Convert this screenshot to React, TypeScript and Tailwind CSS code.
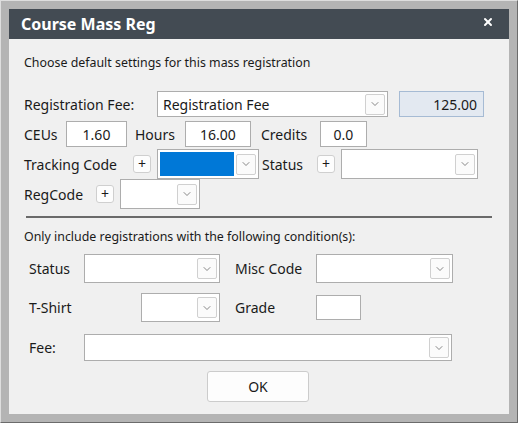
import { ChevronDown, X } from 'lucide-react';

const font = { fontFamily: '"Noto Sans", "Open Sans", sans-serif' };

function DropButton() {
  return (
    <div className="flex h-[21px] w-[20px] shrink-0 items-center justify-center rounded-[2px] border border-[#d0d0d0] bg-[#fbfbfb]">
      <ChevronDown size={12} strokeWidth={1.4} className="text-[#555]" />
    </div>
  );
}

function Select({ w, h = 'h-[26px]', children }: { w: string; h?: string; children?: React.ReactNode }) {
  return (
    <div className={`${w} ${h} flex shrink-0 items-center border border-[#adadad] bg-white pr-[2px]`}>
      <div className="flex min-w-0 flex-1 items-center self-stretch">{children}</div>
      <DropButton />
    </div>
  );
}

function PlusButton() {
  return (
    <div className="flex h-[18px] w-[18px] shrink-0 items-center justify-center rounded-[3px] border border-[#cfcfcf] bg-[#fdfdfd] text-[14px] leading-none text-[#1a1a1a]">
      +
    </div>
  );
}

function Box({ w, value }: { w: string; value?: string }) {
  return (
    <div className={`${w} flex h-[26px] shrink-0 items-center justify-center border border-[#adadad] bg-white text-[14px] text-[#1a1a1a]`}>
      {value}
    </div>
  );
}

export default function App() {
  return (
    <div className="h-[423px] w-[518px] border border-t-[#dedede] border-l-[#dedede] border-b-[#6b6b6b] border-r-[#6b6b6b] bg-[#b4b4b4] p-[8px]" style={font}>
      <div className="flex h-[405px] w-[500px] flex-col bg-[#f0f0f0] text-[#1a1a1a]">
        {/* title bar */}
        <div className="flex h-[30px] shrink-0 items-center justify-between bg-[#434b53] pl-[12px] pr-[15px]">
          <span className="text-[16px] font-bold text-white">Course Mass Reg</span>
          <X size={12} strokeWidth={4} className="mb-[5px] text-white" />
        </div>

        <div className="flex flex-col pl-[15px]">
          <div className="mt-[14px] h-[20px] text-[12.4px] leading-[20px]">Choose default settings for this mass registration</div>

          {/* registration fee */}
          <div className="mt-[18px] flex h-[26px] items-center text-[14px]">
            <span className="w-[133px] shrink-0">Registration Fee:</span>
            <Select w="w-[231px]">
              <span className="pl-[5px] text-[14px]">Registration Fee</span>
            </Select>
            <div className="ml-[11px] flex h-[26px] w-[85px] items-center justify-end border border-[#a6bbd4] bg-[#e3e9f1] pr-[6px] text-[14px]">
              125.00
            </div>
          </div>

          {/* ceus / hours / credits */}
          <div className="mt-[4px] flex h-[26px] items-center text-[14px]">
            <span className="w-[42px] shrink-0">CEUs</span>
            <Box w="w-[61px]" value="1.60" />
            <span className="w-[58px] shrink-0 pl-[8px]">Hours</span>
            <Box w="w-[66px]" value="16.00" />
            <span className="w-[69px] shrink-0 pl-[10px]">Credits</span>
            <Box w="w-[47px]" value="0.0" />
          </div>

          {/* tracking code / status */}
          <div className="mt-[2px] flex h-[30px] items-center text-[14px]">
            <span className="w-[109px] shrink-0">Tracking Code</span>
            <PlusButton />
            <div className="ml-[6px] flex h-[30px] w-[102px] shrink-0 items-center border border-[#adadad] bg-white pr-[2px]">
              <div className="mx-[2px] h-[24px] flex-1 bg-[#0078d7]" />
              <DropButton />
            </div>
            <span className="w-[58px] shrink-0 pl-[3px]">Status</span>
            <PlusButton />
            <div className="ml-[6px]">
              <Select w="w-[137px]" h="h-[30px]" />
            </div>
          </div>

          {/* regcode */}
          <div className="flex h-[30px] items-center text-[14px]">
            <span className="w-[72px] shrink-0">RegCode</span>
            <PlusButton />
            <div className="ml-[6px]">
              <Select w="w-[80px]" h="h-[30px]" />
            </div>
          </div>

          <div className="mt-[7px] mr-[17px] ml-[2px] h-[2px] bg-[#6a6a6a]" />

          <div className="mt-[9px] h-[20px] text-[12.4px] leading-[20px]">Only include registrations with the following condition(s):</div>

          {/* conditions */}
          <div className="mt-[7px] flex h-[29px] items-center pl-[5px] text-[14px]">
            <span className="w-[55px] shrink-0">Status</span>
            <Select w="w-[136px]" h="h-[29px]" />
            <span className="w-[96px] shrink-0 pl-[15px]">Misc Code</span>
            <Select w="w-[137px]" h="h-[29px]" />
          </div>

          <div className="mt-[10px] flex h-[29px] items-center pl-[5px] text-[14px]">
            <span className="w-[112px] shrink-0">T-Shirt</span>
            <Select w="w-[79px]" h="h-[29px]" />
            <span className="w-[96px] shrink-0 pl-[15px]">Grade</span>
            <div className="h-[25px] w-[45px] shrink-0 border border-[#adadad] bg-white" />
          </div>

          <div className="mt-[12px] flex h-[27px] items-center pl-[5px] text-[14px]">
            <span className="w-[55px] shrink-0">Fee:</span>
            <Select w="w-[368px]" h="h-[27px]" />
          </div>

          <div className="mt-[10px] flex">
            <button className="ml-[183px] flex h-[31px] w-[102px] items-center justify-center rounded-[3px] border border-[#cccccc] bg-[#fdfdfd] text-[14px] text-[#1a1a1a]">
              OK
            </button>
          </div>
        </div>
      </div>
    </div>
  );
}
